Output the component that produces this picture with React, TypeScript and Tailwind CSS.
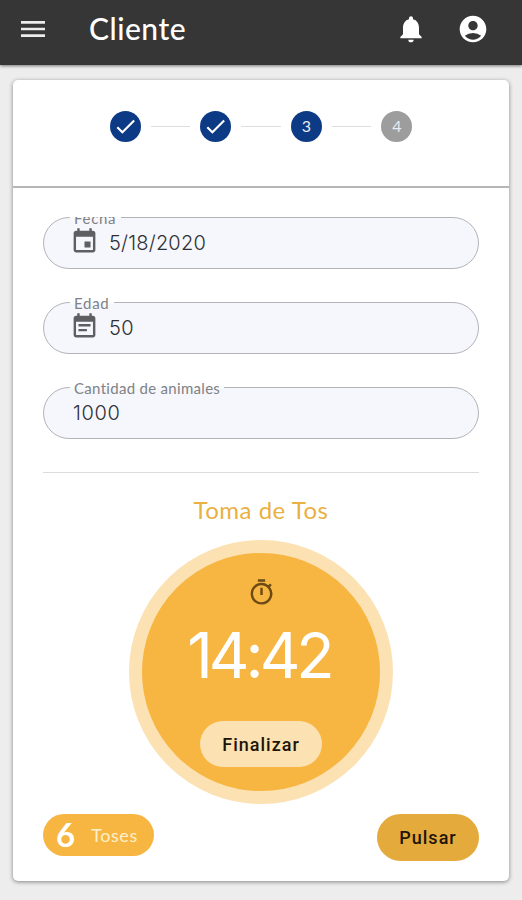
import { useState } from 'react'
import type { ReactNode } from 'react'
import clsx from 'clsx'
import {
  MdMenu,
  MdNotifications,
  MdAccountCircle,
  MdCheck,
  MdEvent,
  MdEventNote,
  MdOutlineTimer,
} from 'react-icons/md'

type StepStatus = 'done' | 'active' | 'pending'

const STEPS: { id: number; status: StepStatus }[] = [
  { id: 1, status: 'done' },
  { id: 2, status: 'done' },
  { id: 3, status: 'active' },
  { id: 4, status: 'pending' },
]

const STEP_CLASSES: Record<StepStatus, string> = {
  done: 'bg-[#0d3a85]',
  active: 'bg-[#0d3a85]',
  pending: 'bg-[#9d9d9d]',
}

interface FieldProps {
  label: string
  value: string
  icon?: ReactNode
  notchClass: string
  labelClass: string
  valueClass: string
}

function Field({ label, value, icon, notchClass, labelClass, valueClass }: FieldProps) {
  return (
    <div className="relative flex h-[52px] items-center rounded-full border-[1.5px] border-[#b3b4b8] bg-[#f6f7fc] pl-[28px]">
      <span className={clsx('absolute -top-[2px] left-[26px] h-[3px] bg-[#fafbfd]', notchClass)} />
      <span className={clsx('absolute -top-[9px] left-[30px] text-[15px] leading-[18px] whitespace-nowrap text-[#808286]', labelClass)}>
        {label}
      </span>
      {icon}
      <span className={clsx("font-['Inter',sans-serif] text-[20px] leading-[24px] font-light text-[#2f3034]", valueClass)}>
        {value}
      </span>
    </div>
  )
}

export default function App() {
  const [coughs, setCoughs] = useState(6)

  return (
    <div className="flex h-[900px] w-full flex-col overflow-hidden bg-[#ededed] font-['Lato',sans-serif]">
      {/* Top bar */}
      <header className="z-10 flex h-[65px] shrink-0 items-start bg-[#363636] pt-[13px] text-white shadow-[0_1px_3px_rgba(0,0,0,0.5)]">
        <button className="ml-[17px] text-[#ececec]">
          <MdMenu className="h-[32px] w-[32px]" />
        </button>
        <h1 className="-mt-px ml-[40px] flex-1 text-[30px] leading-[33px] font-medium tracking-[0.5px]">Cliente</h1>
        <button className="mr-[30px]">
          <MdNotifications className="h-[32px] w-[32px]" />
        </button>
        <button className="mr-[33px]">
          <MdAccountCircle className="h-[32px] w-[32px]" />
        </button>
      </header>

      <main className="mx-[13px] mt-[15px] flex h-[801px] flex-col rounded-[5px] bg-white shadow-[0_1px_4px_rgba(0,0,0,0.45)]">
        {/* Stepper */}
        <div className="flex h-[108px] shrink-0 items-start justify-center border-b-2 border-[#b5b5b5] pt-[30.5px]">
          {STEPS.map((step, i) => (
            <div key={step.id} className="flex items-center">
              {i > 0 && <span className="mx-[10px] h-px w-[39.6px] bg-[#dedede]" />}
              <span className={clsx('flex h-[31px] w-[31px] items-center justify-center rounded-full text-[16px] text-[#e6ebf4]', STEP_CLASSES[step.status])}>
                {step.status === 'done' ? <MdCheck className="h-[25px] w-[25px] text-white" /> : step.id}
              </span>
            </div>
          ))}
        </div>

        {/* Form */}
        <div className="mx-[30px] mt-[29px] flex flex-col gap-[33px] border-b border-[#dcdcdc] pb-[33px]">
          <div className="overflow-hidden">
            <Field
              label="Fecha"
              value="5/18/2020"
              icon={<MdEvent className="-mt-[4px] mr-[10px] -ml-[2px] h-[29px] w-[29px] text-[#5d5f63]" />}
              notchClass="w-[51px]"
              labelClass="tracking-[0.7px]"
              valueClass="tracking-[0.2px]"
            />
          </div>
          <Field
            label="Edad"
            value="50"
            icon={<MdEventNote className="-mt-[4px] mr-[10px] -ml-[2px] h-[29px] w-[29px] text-[#5d5f63]" />}
            notchClass="w-[44px]"
            labelClass="tracking-[0.7px]"
            valueClass="tracking-[0.4px]"
          />
          <Field
            label="Cantidad de animales"
            value="1000"
            notchClass="w-[154px]"
            labelClass="tracking-[0.3px]"
            valueClass="ml-[1px] tracking-[0.6px]"
          />
        </div>

        {/* Timer */}
        <section className="mt-[21px] flex flex-col items-center">
          <h2 className="text-[24px] leading-[32px] tracking-[0.5px] text-[#e9b13f]">Toma de Tos</h2>
          <div className="mt-[14px] flex h-[264px] w-[264px] flex-col items-center rounded-full border-[13px] border-[#fce1b3] bg-[#f7b541]">
            <MdOutlineTimer className="mt-[25px] h-[29px] w-[29px] text-[#6b4a14]" />
            <span className="mt-[15px] -ml-[4px] font-['Inter',sans-serif] text-[63px] leading-[66px] font-normal tracking-[-4px] text-white">
              14:42
            </span>
            <button className="mt-[33px] h-[46px] w-[122px] rounded-full bg-[#fce1b3] font-['Roboto',sans-serif] text-[18px] font-medium tracking-[1px] text-[#1d1509]">
              Finalizar
            </button>
          </div>
        </section>

        <div className="mx-[30px] mt-[10px] flex items-start justify-between">
          <div className="flex h-[42px] w-[111px] items-center rounded-full bg-[#f7b541] pl-[13px] text-white">
            <span className="-mt-[2px] text-[33px] leading-[42px] font-bold">{coughs}</span>
            <span className="ml-[16px] text-[18px] tracking-[0.6px] text-[#fff0c9]">Toses</span>
          </div>
          <button
            onClick={() => setCoughs(coughs + 1)}
            className="h-[47px] w-[102px] rounded-full bg-[#e5aa3c] font-['Roboto',sans-serif] text-[18px] font-medium tracking-[1px] text-[#1d1509]"
          >
            Pulsar
          </button>
        </div>
      </main>
    </div>
  )
}
